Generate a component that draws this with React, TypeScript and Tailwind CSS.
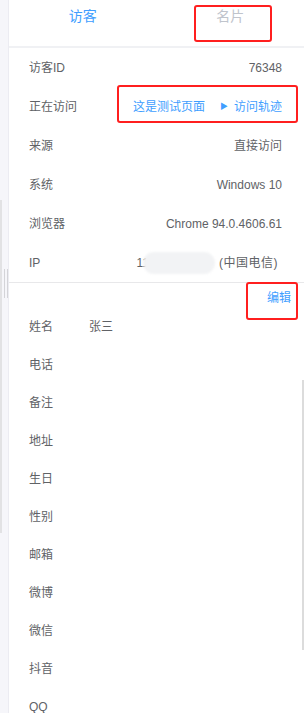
const font = { fontFamily: '"Liberation Sans", "Noto Sans CJK SC", sans-serif' };

const infoRows = [
  { label: "访客ID", value: "76348" },
  { label: "正在访问", value: "visiting" },
  { label: "来源", value: "直接访问" },
  { label: "系统", value: "Windows 10" },
  { label: "浏览器", value: "Chrome 94.0.4606.61" },
  { label: "IP", value: "ip" },
];

const cardFields = [
  { label: "姓名", value: "张三" },
  { label: "电话" },
  { label: "备注" },
  { label: "地址" },
  { label: "生日" },
  { label: "性别" },
  { label: "邮箱" },
  { label: "微博" },
  { label: "微信" },
  { label: "抖音" },
  { label: "QQ" },
];

const RedBox = ({ className }: { className: string }) => (
  <div className={`pointer-events-none absolute rounded-[3px] border-[2.5px] border-[#ff1f1f] ${className}`} />
);

const InfoValue = ({ value }: { value: string }) => {
  if (value === "visiting") {
    return (
      <div className="flex items-center text-[#409eff]">
        <span>这是测试页面</span>
        <span className="ml-[15px] mr-[6px] text-[8px] leading-none">▶</span>
        <span>访问轨迹</span>
      </div>
    );
  }
  if (value === "ip") {
    return (
      <div className="flex items-center pr-[4px]">
        <span>11</span>
        <span className="-ml-[6px] h-[22px] w-[72px] rounded-full bg-[#f2f3f5] blur-[1px]" />
        <span className="ml-[4px] tracking-[0.5px]">(中国电信)</span>
      </div>
    );
  }
  return <span>{value}</span>;
};

export default function App() {
  return (
    <div className="relative flex h-[713px] w-[304px] overflow-hidden bg-white text-[12px] text-[#606266]" style={font}>
      {/* left split handle */}
      <div className="relative w-[9px] shrink-0 border-r border-[#ececf2] bg-[#f6f6fa]">
        <div className="absolute left-0 top-[200px] h-[333px] w-[2px] bg-[#e2e2e4]" />
        <div className="absolute left-[4px] top-[269px] h-[29px] w-px bg-[#d4d4d8]" />
        <div className="absolute left-[7px] top-[269px] h-[29px] w-px bg-[#d4d4d8]" />
      </div>

      <div className="relative flex-1">
        {/* tabs */}
        <div className="relative flex h-[48px] border-b-2 border-[#f0f1f4] pt-[6px] text-[14px] leading-5">
          <div className="flex-1 text-center text-[#409eff]">访客</div>
          <div className="flex-1 text-center text-[#c0c4cc]">名片</div>
          <RedBox className="left-[185px] top-[5px] h-[37px] w-[78px]" />
        </div>

        {/* visitor info */}
        <div className="relative border-b border-[#e8e8ea]">
          {infoRows.map((row) => (
            <div key={row.label} className="flex h-[39px] items-center justify-between pl-[20px] pr-[22px]">
              <span>{row.label}</span>
              <InfoValue value={row.value} />
            </div>
          ))}
          <RedBox className="left-[108px] top-[37px] h-[38px] w-[181px]" />
        </div>

        {/* card */}
        <div className="relative h-[25px] pr-[13px] pt-[5px] text-right leading-5 text-[#409eff]">
          编辑
          <RedBox className="right-[6px] -top-[1px] h-[38px] w-[52px]" />
        </div>
        <div>
          {cardFields.map((f) => (
            <div key={f.label} className="flex h-[38px] items-center pl-[20px]">
              <span className="w-[60px]">{f.label}</span>
              {f.value && <span>{f.value}</span>}
            </div>
          ))}
        </div>

        {/* scrollbar */}
        <div className="absolute right-0 top-[380px] h-[270px] w-[2px] bg-[#dcdcdc]" />
      </div>
    </div>
  );
}
